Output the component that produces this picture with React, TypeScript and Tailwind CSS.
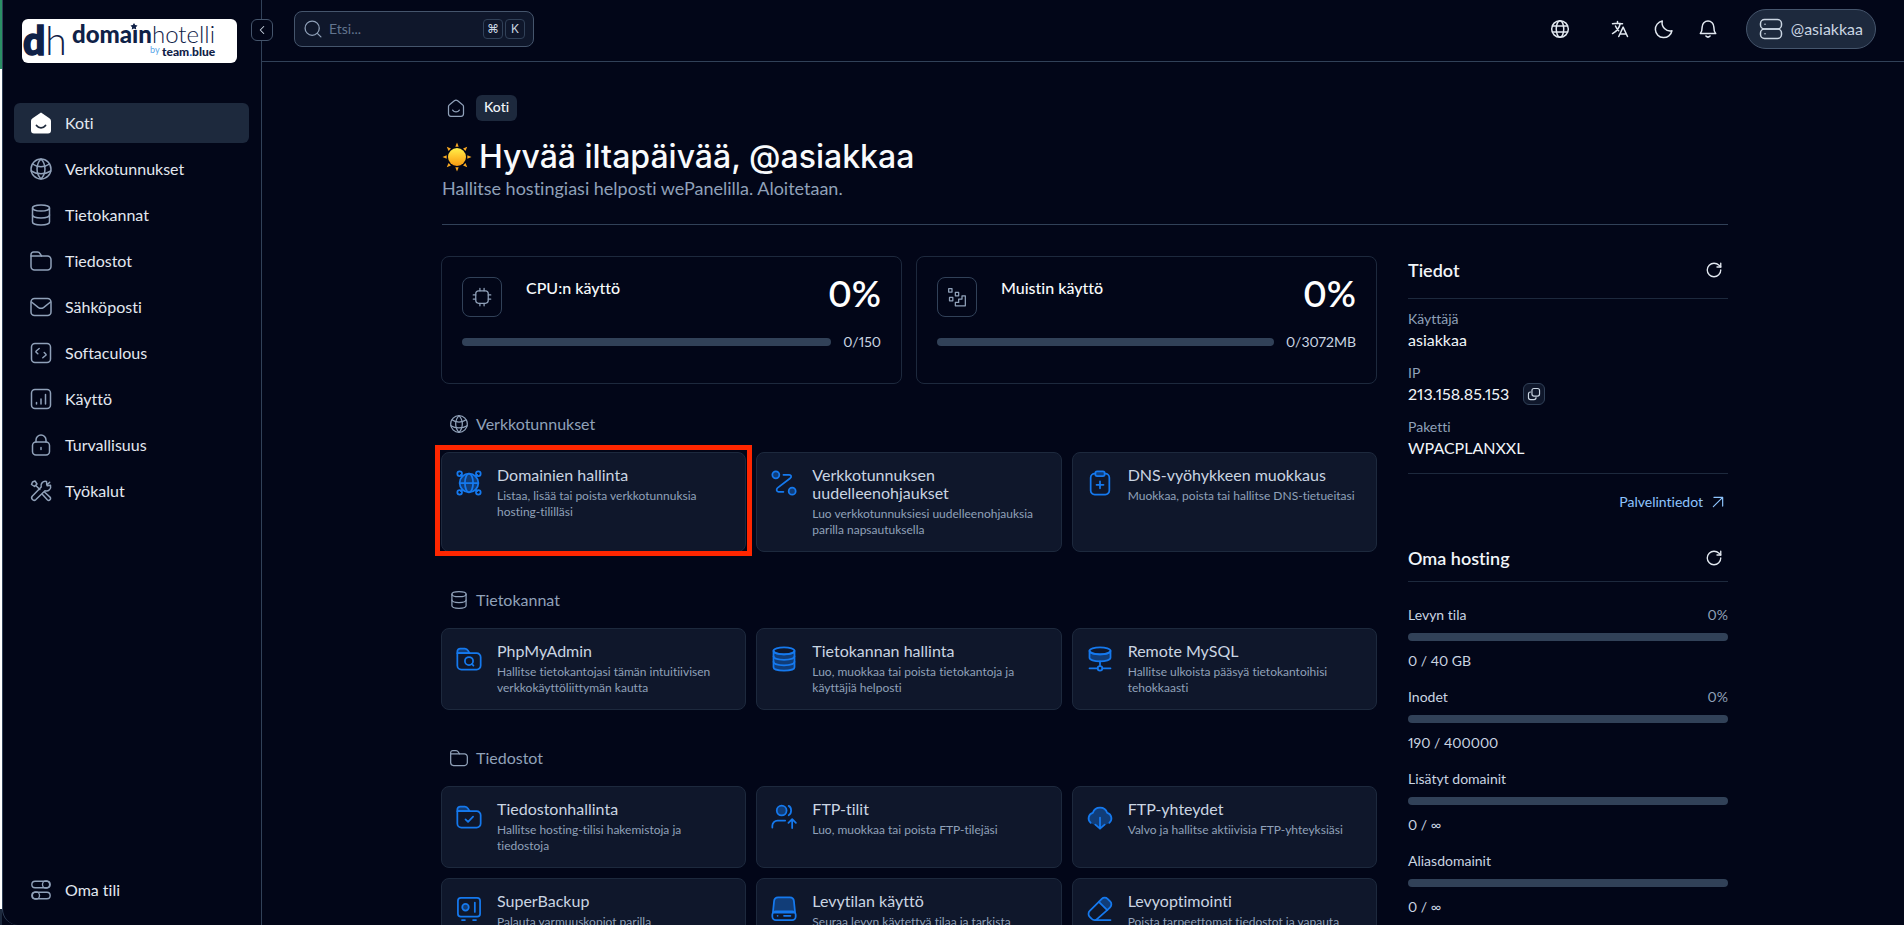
import type { ReactNode } from 'react';
import { ChevronLeft, RotateCw } from 'lucide-react';
import { HiOutlineLanguage } from 'react-icons/hi2';

type IconName = keyof typeof icons;

const icons = {
  homeSolid: (
    <>
      <path d="M12 1.500 3.600 7.200A3 3 0 0 0 2 10v9.500A3 3 0 0 0 5 22.500h14a3 3 0 0 0 3-3V10a3 3 0 0 0-1.600-2.800Z" fill="currentColor" stroke="none" />
      <path d="M7.500 14.500c1.200 1.600 2.700 2.300 4.500 2.300s3.300-.7 4.500-2.300" stroke="#1e293b" strokeWidth="1.800" />
    </>
  ),
  home: (
    <>
      <path d="M3 10.200c0-1 .4-1.600 1.200-2.200L10 3.400c1.500-1.200 2.500-1.200 4 0L19.800 8c.8.600 1.200 1.200 1.200 2.200V19c0 2-1 3-3 3H6c-2 0-3-1-3-3Z" />
      <path d="M8 14.500c1 1.500 2.300 2.200 4 2.200s3-.7 4-2.200" />
    </>
  ),
  globe: (
    <>
      <circle cx="12" cy="12" r="10" />
      <path d="M12 2c-5.300 5.500-5.300 14.500 0 20M12 2c5.300 5.500 5.300 14.500 0 20" />
      <path d="M3.500 7c4.500 3.500 12.500 3.500 17 0M2.200 14c5.300 3.500 14.300 3.500 19.600 0" />
    </>
  ),
  globeLines: (
    <>
      <circle cx="12" cy="12" r="10" />
      <ellipse cx="12" cy="12" rx="4.500" ry="10" />
      <path d="M3 8.500h18M3 15.500h18" />
    </>
  ),
  database: (
    <>
      <ellipse cx="12" cy="5" rx="8.500" ry="3" />
      <path d="M3.500 5v14c0 1.700 3.800 3 8.500 3s8.500-1.300 8.500-3V5" />
      <path d="M3.500 12c0 1.700 3.800 3 8.500 3s8.500-1.300 8.500-3" />
    </>
  ),
  databaseStack: (
    <>
      <path d="M3 5v14c0 1.800 4 3 9 3s9-1.200 9-3V5c0 1.800-4 3-9 3S3 6.800 3 5Z" fill="currentColor" fillOpacity=".4" />
      <ellipse cx="12" cy="5" rx="9" ry="3" />
      <path d="M3 9.700c0 1.800 4 3 9 3s9-1.200 9-3M3 14.400c0 1.800 4 3 9 3s9-1.200 9-3" />
    </>
  ),
  databaseRemote: (
    <>
      <path d="M3 5v6c0 1.700 4 3 9 3s9-1.300 9-3V5c0 1.700-4 3-9 3S3 6.700 3 5Z" fill="currentColor" fillOpacity=".4" />
      <ellipse cx="12" cy="5" rx="9" ry="3" />
      <path d="M12 14v4M3 20h7M14 20h7" />
      <circle cx="12" cy="20" r="2" />
    </>
  ),
  folder: (
    <>
      <path d="M2 7V5.500A2.500 2.500 0 0 1 4.500 3h4c1.500 0 2 .6 2.700 1.800L12.500 7" />
      <path d="M2 7h16.500A3.500 3.500 0 0 1 22 10.500v7a3.500 3.500 0 0 1-3.500 3.500h-13A3.500 3.500 0 0 1 2 17.500Z" />
    </>
  ),
  folderSearch: (
    <>
      <path d="M2 7V5.500A2.500 2.500 0 0 1 4.500 3h4c1.500 0 2 .6 2.700 1.800L12.500 7Z" fill="currentColor" fillOpacity=".4" />
      <path d="M2 7h16.500A3.500 3.500 0 0 1 22 10.500v7a3.500 3.500 0 0 1-3.500 3.500h-13A3.500 3.500 0 0 1 2 17.500Z" />
      <circle cx="12" cy="13.800" r="3.500" />
      <path d="m14.500 16.300 1.300 1.300" />
    </>
  ),
  folderCheck: (
    <>
      <path d="M2 7V5.500A2.500 2.500 0 0 1 4.500 3h4c1.500 0 2 .6 2.700 1.800L12.500 7Z" fill="currentColor" fillOpacity=".4" />
      <path d="M2 7h16.500A3.500 3.500 0 0 1 22 10.500v7a3.500 3.500 0 0 1-3.500 3.500h-13A3.500 3.500 0 0 1 2 17.500Z" />
      <path d="m9 14 2.200 2.200 4.300-4.500" />
    </>
  ),
  mail: (
    <>
      <rect x="2" y="3.500" width="20" height="17" rx="3.500" />
      <path d="m2.500 7 6.700 5.300c2.200 1.600 3.400 1.600 5.600 0L21.500 7" />
    </>
  ),
  code: (
    <>
      <rect x="2.500" y="2.500" width="19" height="19" rx="3.500" />
      <path d="m10.200 7.500-2.700 2.300c-.8.700-.8 1 0 1.700l1.300 1.200M13.800 16.800l2.700-2.300c.8-.7.8-1 0-1.700l-1.300-1.300" />
    </>
  ),
  chart: (
    <>
      <rect x="2.500" y="2.500" width="19" height="19" rx="3.500" />
      <path d="M7.500 17v-1.500M12 17v-5M16.500 17V7.500" />
    </>
  ),
  lock: (
    <>
      <rect x="3.500" y="9" width="17" height="13" rx="3.500" />
      <path d="M7 9V7a5 5 0 0 1 10 0v2M12 14.500v2" />
    </>
  ),
  tools: (
    <>
      <path d="M5.500 7.500 2.500 5.500l1-2.500 2.500-1 2 3ZM6.800 6.500l4 4" />
      <path d="m13.500 15.500 4.800 5.300a1.900 1.900 0 0 0 2.700-2.700l-5.300-4.800" />
      <path d="M20.700 3.200 17.800 6l-.3-3.500c-3.500-.8-6.300 2-5.300 5.500l-9 9.300a2.500 2.500 0 0 0 3.500 3.500l9.300-9c3.500 1 6.500-2 5.500-5.500l-3.200.5" />
    </>
  ),
  toggles: (
    <>
      <rect x="2" y="2.500" width="20" height="7" rx="3.500" />
      <circle cx="17.500" cy="6" r="3.900" />
      <rect x="2" y="14.500" width="20" height="7" rx="3.500" />
      <circle cx="6.500" cy="18" r="3.900" />
    </>
  ),
  search: (
    <>
      <circle cx="11" cy="11" r="8.500" />
      <path d="m17.500 17.500 4 4" />
    </>
  ),
  moon: <path d="M21.500 14.100A9.800 9.800 0 0 1 9.900 2.500a10 10 0 1 0 11.600 11.600Z" />,
  bell: (
    <path d="M2.800 17.500c1.700-2 2.200-3.500 2.200-8a7 7 0 0 1 14 0c0 4.500.5 6 2.200 8ZM9.500 20.500c1.500 1.500 3.500 1.500 5 0" />
  ),
  server: (
    <>
      <rect x="1.500" y="2.500" width="21" height="9.500" rx="4" />
      <rect x="1.500" y="12" width="21" height="9.500" rx="4" />
      <path d="M6 7.200h.01M6 16.800h.01" />
    </>
  ),
  cpu: (
    <>
      <rect x="4.500" y="4.500" width="15" height="15" rx="3.500" />
      <path d="M9.500 1.500v3M14.500 1.500v3M9.500 19.500v3M14.500 19.500v3M1.500 9.500h3M1.500 14.500h3M19.500 9.500h3M19.500 14.500h3" />
    </>
  ),
  memory: (
    <>
      <rect x="2" y="2" width="4" height="4" />
      <rect x="10" y="6.500" width="4" height="4" />
      <rect x="3" y="12.500" width="4" height="4" />
      <path d="M10 22.500v-4h4v-4h4v-4h4v12Z" />
    </>
  ),
  copy: (
    <>
      <rect x="8.500" y="2.500" width="13" height="13" rx="3.500" />
      <path d="M6 8.500c-2.500 0-3.500 1-3.500 3.500v6c0 2.500 1 3.500 3.500 3.500h6c2.500 0 3.500-1 3.500-3.500" />
    </>
  ),
  arrow: <path d="M4 20 20 4M5 4h15v15" />,
  network: (
    <>
      <circle cx="12" cy="12" r="8" fill="currentColor" fillOpacity=".4" />
      <ellipse cx="12" cy="12" rx="3.500" ry="8" />
      <path d="M4 12h16M6.200 6.200 5 5M17.800 6.200 19 5M6.200 17.800 5 19M17.800 17.800 19 19" />
      <circle cx="4" cy="4" r="2" />
      <circle cx="20" cy="4" r="2" />
      <circle cx="4" cy="20" r="2" />
      <circle cx="20" cy="20" r="2" />
    </>
  ),
  route: (
    <>
      <circle cx="5" cy="5" r="3" fill="currentColor" fillOpacity=".4" />
      <circle cx="19" cy="19" r="3" fill="currentColor" fillOpacity=".4" />
      <path d="M11.500 5h5c1.800 0 2.200 1.800.8 2.900L6.500 16.200c-1.300 1.100-1 3.300.8 3.300h4.200" />
    </>
  ),
  clipboard: (
    <>
      <path d="M16 4h.5A3.500 3.500 0 0 1 20 7.500v11a3.500 3.500 0 0 1-3.500 3.500h-9A3.500 3.500 0 0 1 4 18.500v-11A3.500 3.500 0 0 1 7.500 4H8" />
      <rect x="8" y="2" width="8" height="4" rx="1.500" fill="currentColor" fillOpacity=".4" />
      <path d="M12 10.500v6M9 13.500h6" />
    </>
  ),
  userUp: (
    <>
      <circle cx="10" cy="6.500" r="4.200" fill="currentColor" fillOpacity=".4" />
      <path d="M16 2.500c2.800 1.300 2.800 6.700 0 8M2 21v-1.500A4.500 4.500 0 0 1 6.500 15H13M19 21.500v-7M15.800 17l3.200-3.200 3.200 3.200" />
    </>
  ),
  cloudDown: (
    <>
      <path d="M4.500 17.300A5 5 0 0 1 5.800 8.500a6.500 6.500 0 0 1 12.400 0 5 5 0 0 1 1.300 8.800L12 21Z" fill="currentColor" fillOpacity=".4" stroke="none" />
      <path d="M4 17a4.900 4.900 0 0 1 1.800-8.500 6.500 6.500 0 0 1 12.400 0A4.900 4.900 0 0 1 20 17M12 12.500V22M8 18.500l4 3.500 4-3.500" />
    </>
  ),
  safe: (
    <>
      <rect x="2.500" y="2.500" width="19" height="16" rx="2.500" />
      <circle cx="9" cy="10.500" r="2.800" fill="currentColor" fillOpacity=".4" />
      <path d="M17 6.500v8M6 21.500h2.500M15.500 21.500H18" />
    </>
  ),
  disk: (
    <>
      <path d="M2.500 15 3.500 5.200A3.500 3.500 0 0 1 7 2h10a3.500 3.500 0 0 1 3.500 3.200l1 9.800Z" fill="currentColor" fillOpacity=".4" />
      <rect x="2" y="14" width="20" height="7.500" rx="3" />
      <path d="M6.500 17.800h.01M12 17.800h5.500" />
    </>
  ),
  eraser: (
    <>
      <path d="m11 5.800 2.500-2.500a3.500 3.500 0 0 1 5 0l2.200 2.200a3.500 3.500 0 0 1 0 5L18.200 13Z" fill="currentColor" fillOpacity=".4" />
      <path d="m11 5.800-7.800 7.900a3.500 3.500 0 0 0 0 5l1.500 1.600c1.600 1.600 3.600 1.600 5.200 0l8.300-7.300M7.500 21.500H21" />
    </>
  ),
};

function Icon({ name, className, strokeWidth = 1.5 }: { name: IconName; className: string; strokeWidth?: number }) {
  return (
    <svg
      viewBox="0 0 24 24"
      fill="none"
      stroke="currentColor"
      strokeWidth={strokeWidth}
      strokeLinecap="round"
      strokeLinejoin="round"
      aria-hidden="true"
      className={`shrink-0 ${className}`}
    >
      {icons[name]}
    </svg>
  );
}

const navItems: { label: string; icon: IconName }[] = [
  { label: 'Koti', icon: 'homeSolid' },
  { label: 'Verkkotunnukset', icon: 'globe' },
  { label: 'Tietokannat', icon: 'database' },
  { label: 'Tiedostot', icon: 'folder' },
  { label: 'Sähköposti', icon: 'mail' },
  { label: 'Softaculous', icon: 'code' },
  { label: 'Käyttö', icon: 'chart' },
  { label: 'Turvallisuus', icon: 'lock' },
  { label: 'Työkalut', icon: 'tools' },
];

type Tool = { title: string; text: string; icon: IconName; marked?: boolean };

const sections: { title: string; icon: IconName; tools: Tool[] }[] = [
  {
    title: 'Verkkotunnukset',
    icon: 'globe',
    tools: [
      { title: 'Domainien hallinta', text: 'Listaa, lisää tai poista verkkotunnuksia hosting-tililläsi', icon: 'network', marked: true },
      { title: 'Verkkotunnuksen uudelleenohjaukset', text: 'Luo verkkotunnuksiesi uudelleenohjauksia parilla napsautuksella', icon: 'route' },
      { title: 'DNS-vyöhykkeen muokkaus', text: 'Muokkaa, poista tai hallitse DNS-tietueitasi', icon: 'clipboard' },
    ],
  },
  {
    title: 'Tietokannat',
    icon: 'database',
    tools: [
      { title: 'PhpMyAdmin', text: 'Hallitse tietokantojasi tämän intuitiivisen verkkokäyttöliittymän kautta', icon: 'folderSearch' },
      { title: 'Tietokannan hallinta', text: 'Luo, muokkaa tai poista tietokantoja ja käyttäjiä helposti', icon: 'databaseStack' },
      { title: 'Remote MySQL', text: 'Hallitse ulkoista pääsyä tietokantoihisi tehokkaasti', icon: 'databaseRemote' },
    ],
  },
  {
    title: 'Tiedostot',
    icon: 'folder',
    tools: [
      { title: 'Tiedostonhallinta', text: 'Hallitse hosting-tilisi hakemistoja ja tiedostoja', icon: 'folderCheck' },
      { title: 'FTP-tilit', text: 'Luo, muokkaa tai poista FTP-tilejäsi', icon: 'userUp' },
      { title: 'FTP-yhteydet', text: 'Valvo ja hallitse aktiivisia FTP-yhteyksiäsi', icon: 'cloudDown' },
      { title: 'SuperBackup', text: 'Palauta varmuuskopiot parilla', icon: 'safe' },
      { title: 'Levytilan käyttö', text: 'Seuraa levyn käytettyä tilaa ja tarkista', icon: 'disk' },
      { title: 'Levyoptimointi', text: 'Poista tarpeettomat tiedostot ja vapauta', icon: 'eraser' },
    ],
  },
];

const usage = [
  { label: 'Levyn tila', percent: '0%', value: '0 / 40 GB' },
  { label: 'Inodet', percent: '0%', value: '190 / 400000' },
  { label: 'Lisätyt domainit', percent: '', value: '0 / ∞' },
  { label: 'Aliasdomainit', percent: '', value: '0 / ∞' },
];

function Logo() {
  return (
    <svg viewBox="0 0 215 44" role="img" aria-label="domainhotelli by team.blue" className="h-11 w-full rounded-md bg-white">
      <g fill="#0f2147" fontFamily="Lato, sans-serif">
        <text x="1" y="36" fontSize="39">
          <tspan fontWeight="900" stroke="#0f2147" strokeWidth="1.500">d</tspan>
          <tspan fontWeight="300">h</tspan>
        </text>
        <text x="50" y="24" fontSize="24">
          <tspan fontWeight="900">domaın</tspan>
          <tspan fontWeight="300">hotelli</tspan>
        </text>
        <text x="128" y="34" fontSize="9" fill="#58a6e8">by</text>
        <text x="140" y="37" fontSize="12" fontWeight="900">team<tspan fill="#1579ee">.</tspan>blue</text>
        <path d="m112 4 1.200 2.100 2.300.4-1.600 1.700.3 2.300-2.200-1-2.200 1 .3-2.300-1.600-1.700 2.300-.4Z" />
      </g>
    </svg>
  );
}

function Sun() {
  return (
    <svg viewBox="0 0 30 30" role="img" aria-label="Aurinko" className="h-[30px] w-[30px] shrink-0">
      <defs>
        <linearGradient id="sun" x1="0" y1="0" x2="0" y2="1">
          <stop offset="0" stopColor="#fff04a" />
          <stop offset="0.500" stopColor="#ffc42c" />
          <stop offset="1" stopColor="#f49a12" />
        </linearGradient>
      </defs>
      <circle cx="15" cy="15" r="9" fill="url(#sun)" />
      {[0, 45, 90, 135, 180, 225, 270, 315].map((angle) => (
        <path key={angle} d="m15 .5 1.700 4.200h-3.400Z" fill="#f7a823" transform={`rotate(${angle} 15 15)`} />
      ))}
    </svg>
  );
}

function Bar({ label }: { label: string }) {
  return <div role="progressbar" aria-label={label} aria-valuenow={0} className="h-2 w-full rounded-full bg-slate-700" />;
}

function Meter({ title, icon, value }: { title: string; icon: IconName; value: string }) {
  return (
    <div className="rounded-lg border border-slate-800 px-5 pt-5 pb-[31px]">
      <div className="flex items-start">
        <div className="flex h-10 w-10 items-center justify-center rounded-lg border border-slate-700 text-slate-400">
          <Icon name={icon} className="h-5 w-5" />
        </div>
        <h2 className="ml-6 text-base leading-[22px] font-medium text-slate-50">{title}</h2>
        <span className="ml-auto text-4xl leading-8 font-semibold text-white">0%</span>
      </div>
      <div className="mt-[15px] flex items-center gap-3">
        <Bar label={title} />
        <span className="text-sm text-slate-300">{value}</span>
      </div>
    </div>
  );
}

function ToolCard({ title, text, icon, marked }: Tool) {
  return (
    <a href="#" className="relative flex gap-3.5 rounded-lg border border-slate-800 bg-slate-900 px-[13px] py-[13px]">
      <Icon name={icon} className="mt-[3px] h-7 w-7 text-[#1579ee]" />
      <div className="min-w-0">
        <h3 className="text-base leading-[18px] text-slate-300">{title}</h3>
        <p className="mt-1 text-xs leading-4 text-slate-400">{text}</p>
      </div>
      {marked && <span className="pointer-events-none absolute -inset-x-[7px] -top-2 -bottom-[5px] border-5 border-[#ff2600]" />}
    </a>
  );
}

function PanelTitle({ children, className }: { children: ReactNode; className: string }) {
  return (
    <div className={`flex items-center justify-between border-b border-slate-800 pr-[5px] ${className}`}>
      <h2 className="text-lg font-semibold text-slate-100">{children}</h2>
      <button type="button" aria-label="Päivitä" className="text-slate-200">
        <RotateCw className="h-[18px] w-[18px]" strokeWidth={1.8} />
      </button>
    </div>
  );
}

export default function App() {
  return (
    <div className="flex h-screen overflow-hidden bg-slate-950 font-[Lato,sans-serif] text-slate-300 proportional-nums [font-variant-ligatures:none]">
      <div className="flex w-0.5 shrink-0 flex-col">
        <div className="h-[69px] bg-[#2a8f65]" />
        <div className="flex-1 bg-white" />
        <div className="h-4 bg-slate-800" />
      </div>

      <aside className="relative flex w-[260px] shrink-0 flex-col rounded-bl-2xl border-x border-slate-700 pb-[15px]">
        <div className="mt-[19px] ml-[19px] w-[215px]">
          <Logo />
        </div>
        <button
          type="button"
          aria-label="Piilota valikko"
          className="absolute top-[19px] -right-3 flex h-[22px] w-[22px] items-center justify-center rounded-md border border-slate-600 bg-slate-950 text-slate-300"
        >
          <ChevronLeft className="h-3.5 w-3.5" strokeWidth={1.8} />
        </button>
        <nav className="mt-10 flex flex-1 flex-col gap-1.5 pr-3 pl-[11px]">
          {navItems.map((item, i) => (
            <a
              key={item.label}
              href="#"
              className={`flex h-10 items-center gap-3 rounded-md px-[15px] text-base text-slate-200 ${i === 0 ? 'bg-slate-800' : ''}`}
            >
              <Icon name={item.icon} className={`h-6 w-6 ${i === 0 ? 'text-white' : 'text-slate-400'}`} />
              {item.label}
            </a>
          ))}
          <a href="#" className="mt-auto flex h-10 items-center gap-3 rounded-md px-[15px] text-base text-slate-200">
            <Icon name="toggles" className="h-[22px] w-6 text-slate-400" />
            Oma tili
          </a>
        </nav>
      </aside>

      <div className="flex min-w-0 flex-1 flex-col">
        <header className="flex h-[62px] shrink-0 items-center border-b border-slate-700 pr-7 pb-1 pl-8">
          <label className="flex h-9 w-60 items-center gap-1.5 rounded-lg border border-slate-600 bg-slate-900 px-2">
            <Icon name="search" className="h-5 w-5 text-slate-400" />
            <input type="text" aria-label="Etsi" placeholder="Etsi..." className="min-w-0 flex-1 bg-transparent text-sm outline-none placeholder:text-slate-500" />
            <span className="flex gap-0.5">
              <kbd className="flex h-5 w-5 items-center justify-center rounded border border-slate-700 font-[Inter,'DejaVu_Sans',sans-serif] text-xs">⌘</kbd>
              <kbd className="flex h-5 w-5 items-center justify-center rounded border border-slate-700 font-[Inter,sans-serif] text-xs">K</kbd>
            </span>
          </label>
          <div className="ml-auto flex items-center gap-6 text-slate-200">
            <button type="button" aria-label="Sivusto" className="mr-4">
              <Icon name="globeLines" className="h-5 w-5" strokeWidth={1.8} />
            </button>
            <button type="button" aria-label="Kieli">
              <HiOutlineLanguage className="h-5 w-5" strokeWidth={1.8} />
            </button>
            <button type="button" aria-label="Teema">
              <Icon name="moon" className="h-5 w-5" strokeWidth={1.8} />
            </button>
            <button type="button" aria-label="Ilmoitukset">
              <Icon name="bell" className="h-5 w-5" strokeWidth={1.8} />
            </button>
            <button type="button" className="ml-1 flex h-10 items-center gap-2 rounded-full border border-slate-600 bg-slate-800 px-3 text-base text-slate-300">
              <Icon name="server" className="h-6 w-6" />
              @asiakkaa
            </button>
          </div>
        </header>

        <main className="flex-1 overflow-y-auto pl-1 [scrollbar-width:none]">
          <div className="mx-auto max-w-[1286px]">
            <nav aria-label="Murupolku" className="mt-[33px] flex items-center gap-2.5 pl-1">
              <a href="#" aria-label="Koti">
                <Icon name="home" className="h-5 w-5 text-slate-400" />
              </a>
              <span className="rounded-md bg-slate-800 px-2 pt-0.5 pb-1 text-sm font-medium text-slate-100">Koti</span>
            </nav>
            <div className="border-b border-slate-700 pt-[17px] pb-6">
              <h1 className="flex items-center gap-[7px] font-[Inter,sans-serif] text-[32px] leading-[38px] font-medium text-slate-50">
                <Sun />
                Hyvää iltapäivää, @asiakkaa
              </h1>
              <p className="text-lg leading-6 text-slate-400">Hallitse hostingiasi helposti wePanelilla. Aloitetaan.</p>
            </div>

            <div className="mt-[31px] grid grid-cols-[minmax(0,1fr)_320px] gap-[31px]">
              <div className="-ml-px">
                <div className="grid grid-cols-2 gap-3.5">
                  <Meter title="CPU:n käyttö" icon="cpu" value="0/150" />
                  <Meter title="Muistin käyttö" icon="memory" value="0/3072MB" />
                </div>
                {sections.map((section) => (
                  <section key={section.title} className="mt-9 first-of-type:mt-7">
                    <div className="mb-4 flex items-center gap-[7px] pl-2 text-slate-400">
                      <Icon name={section.icon} className="h-5 w-5" />
                      <h2 className="text-base">{section.title}</h2>
                    </div>
                    <div className="grid grid-cols-3 gap-2.5">
                      {section.tools.map((tool) => (
                        <ToolCard key={tool.title} {...tool} />
                      ))}
                    </div>
                  </section>
                ))}
              </div>

              <aside>
                <PanelTitle className="pb-3.5">Tiedot</PanelTitle>
                <dl className="border-b border-slate-800 pt-2.5 pb-0.5 [&_dd]:mb-[11px] [&_dd]:h-6 [&_dd]:text-base [&_dd]:text-slate-100 [&_dt]:text-sm [&_dt]:leading-[19px] [&_dt]:text-slate-400">
                  <dt>Käyttäjä</dt>
                  <dd>asiakkaa</dd>
                  <dt>IP</dt>
                  <dd className="flex items-center gap-3.5">
                    213.158.85.153
                    <button type="button" aria-label="Kopioi IP" className="flex h-[22px] w-[22px] items-center justify-center rounded-md border border-slate-700 bg-slate-900 text-slate-300">
                      <Icon name="copy" className="h-3.5 w-3.5" strokeWidth={2} />
                    </button>
                  </dd>
                  <dt>Paketti</dt>
                  <dd>WPACPLANXXL</dd>
                </dl>
                <a href="#" className="mt-[18px] flex items-center justify-end gap-2 pr-[3px] text-sm text-blue-300">
                  Palvelintiedot
                  <Icon name="arrow" className="h-3.5 w-3.5" strokeWidth={2} />
                </a>
                <div className="mt-8">
                  <PanelTitle className="pb-[9px]">Oma hosting</PanelTitle>
                </div>
                <ul className="mt-[23px] flex flex-col gap-4 text-sm">
                  {usage.map((row) => (
                    <li key={row.label}>
                      <div className="flex justify-between">
                        <span>{row.label}</span>
                        <span className="text-slate-400">{row.percent}</span>
                      </div>
                      <div className="mt-2 mb-2.5">
                        <Bar label={row.label} />
                      </div>
                      {row.value}
                    </li>
                  ))}
                </ul>
              </aside>
            </div>
          </div>
        </main>
      </div>
    </div>
  );
}
